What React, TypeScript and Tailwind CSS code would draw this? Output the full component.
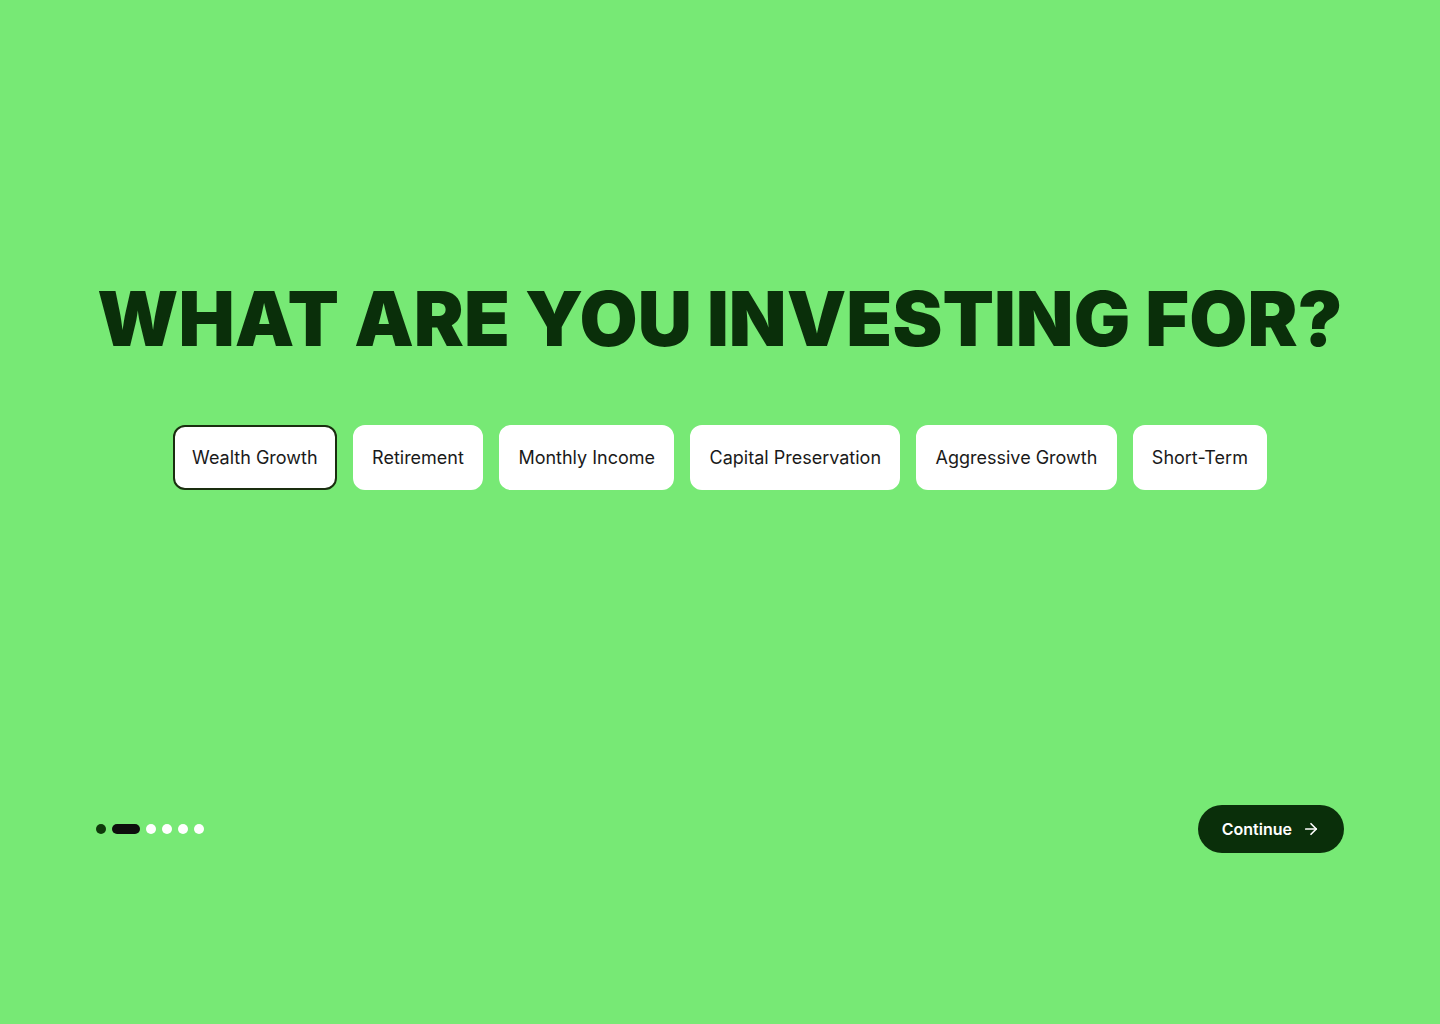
import { ArrowRight } from 'lucide-react'

const goals = ['Wealth Growth', 'Retirement', 'Monthly Income', 'Capital Preservation', 'Aggressive Growth', 'Short-Term']

export default function App() {
  const selected = 'Wealth Growth'

  return (
    <div className="min-h-screen w-full bg-[#77e975] font-['Inter','Noto_Sans',sans-serif] text-[#0a2f0a] flex flex-col px-24">
      <h1 className="pt-[277px] text-center whitespace-nowrap text-[75px] leading-[83px] font-black tracking-[0.001em] text-[#0a2f0a]">
        WHAT ARE YOU INVESTING FOR?
      </h1>

      <div className="mt-[65px] flex justify-center gap-4">
        {goals.map(g => (
          <button
            key={g}
            className={`h-[65px] px-[17.25px] rounded-xl bg-white text-[18px] text-[#1a1a1a] ${
              g === selected ? 'border-2 border-[#1a2e0f]' : 'border-2 border-white'
            }`}
          >
            {g}
          </button>
        ))}
      </div>

      <div className="mt-[315px] flex items-center justify-between">
        <div className="flex items-center gap-1.5">
          <span className="w-2.5 h-2.5 rounded-full bg-[#0f3a0b]" />
          <span className="w-7 h-2.5 rounded-full bg-[#0d0f0c]" />
          <span className="w-2.5 h-2.5 rounded-full bg-white" />
          <span className="w-2.5 h-2.5 rounded-full bg-white" />
          <span className="w-2.5 h-2.5 rounded-full bg-white" />
          <span className="w-2.5 h-2.5 rounded-full bg-white" />
        </div>

        <button className="h-12 px-6 rounded-full bg-[#0a2f0a] text-white text-base font-semibold flex items-center gap-2.5">
          Continue
          <ArrowRight className="w-[18px] h-[18px]" strokeWidth={2.25} />
        </button>
      </div>
    </div>
  )
}
